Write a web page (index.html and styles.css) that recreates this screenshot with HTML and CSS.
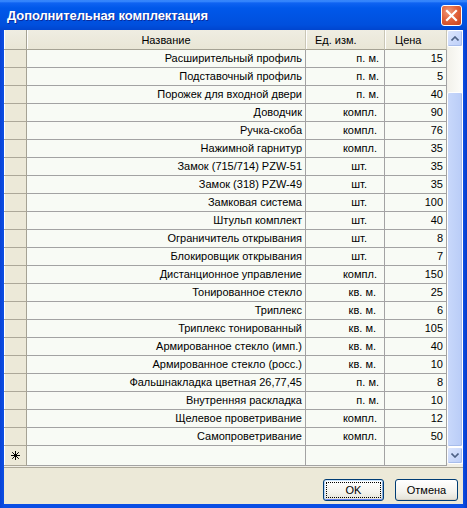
FILE: index.html
```html
<!DOCTYPE html>
<html lang="ru">
<head>
    <meta charset="UTF-8">
    <title>Дополнительная комплектация</title>
    <link rel="stylesheet" href="styles.css">
</head>
<body>
<div class="window">
    <!-- заголовок окна -->
    <div class="titlebar">
        <span class="title">Дополнительная комплектация</span>
        <span class="close">
            <svg width="13" height="13" viewBox="0 0 13 13"><path d="M2 2 L11 11 M11 2 L2 11" stroke="#fff" stroke-width="2.2" stroke-linecap="square"/></svg>
        </span>
    </div>
    <div class="client">
        <div class="gridBox">
            <div class="grid">
                <table class="table">
                    <colgroup>
                        <col class="cRh">
                        <col class="cName">
                        <col class="cUnit">
                        <col class="cPrice">
                    </colgroup>
                    <thead>
                    <tr>
                        <th class="rh"></th>
                        <th class="hName">Название</th>
                        <th class="hLeft">Ед. изм.</th>
                        <th class="hLeft hPrice">Цена</th>
                    </tr>
                    </thead>
                    <tbody>
                    <tr><td class="rh"></td><td class="name">Расширительный профиль</td><td class="unit pm">п. м.</td><td class="price">15</td></tr>
                    <tr><td class="rh"></td><td class="name">Подставочный профиль</td><td class="unit pm">п. м.</td><td class="price">5</td></tr>
                    <tr><td class="rh"></td><td class="name">Порожек для входной двери</td><td class="unit pm">п. м.</td><td class="price">40</td></tr>
                    <tr><td class="rh"></td><td class="name">Доводчик</td><td class="unit kompl">компл.</td><td class="price">90</td></tr>
                    <tr><td class="rh"></td><td class="name">Ручка-скоба</td><td class="unit kompl">компл.</td><td class="price">76</td></tr>
                    <tr><td class="rh"></td><td class="name">Нажимной гарнитур</td><td class="unit kompl">компл.</td><td class="price">35</td></tr>
                    <tr><td class="rh"></td><td class="name">Замок (715/714) PZW-51</td><td class="unit sht">шт.</td><td class="price">35</td></tr>
                    <tr><td class="rh"></td><td class="name">Замок (318) PZW-49</td><td class="unit sht">шт.</td><td class="price">35</td></tr>
                    <tr><td class="rh"></td><td class="name">Замковая система</td><td class="unit sht">шт.</td><td class="price">100</td></tr>
                    <tr><td class="rh"></td><td class="name">Штульп комплект</td><td class="unit sht">шт.</td><td class="price">40</td></tr>
                    <tr><td class="rh"></td><td class="name">Ограничитель открывания</td><td class="unit sht">шт.</td><td class="price">8</td></tr>
                    <tr><td class="rh"></td><td class="name">Блокировщик открывания</td><td class="unit sht">шт.</td><td class="price">7</td></tr>
                    <tr><td class="rh"></td><td class="name">Дистанционное управление</td><td class="unit kompl">компл.</td><td class="price">150</td></tr>
                    <tr><td class="rh"></td><td class="name">Тонированное стекло</td><td class="unit kvm">кв. м.</td><td class="price">25</td></tr>
                    <tr><td class="rh"></td><td class="name">Триплекс</td><td class="unit kvm">кв. м.</td><td class="price">6</td></tr>
                    <tr><td class="rh"></td><td class="name">Триплекс тонированный</td><td class="unit kvm">кв. м.</td><td class="price">105</td></tr>
                    <tr><td class="rh"></td><td class="name">Армированное стекло (имп.)</td><td class="unit kvm">кв. м.</td><td class="price">40</td></tr>
                    <tr><td class="rh"></td><td class="name">Армированное стекло (росс.)</td><td class="unit kvm">кв. м.</td><td class="price">10</td></tr>
                    <tr><td class="rh"></td><td class="name">Фальшнакладка цветная 26,77,45</td><td class="unit pm">п. м.</td><td class="price">8</td></tr>
                    <tr><td class="rh"></td><td class="name">Внутренняя раскладка</td><td class="unit pm">п. м.</td><td class="price">10</td></tr>
                    <tr><td class="rh"></td><td class="name">Щелевое проветривание</td><td class="unit kompl">компл.</td><td class="price">12</td></tr>
                    <tr><td class="rh"></td><td class="name">Самопроветривание</td><td class="unit kompl">компл.</td><td class="price">50</td></tr>
                    <!-- новая строка -->
                    <tr>
                        <td class="rh newRow">
                            <svg width="9" height="9" viewBox="0 0 9 9"><path d="M4.5 0 V9 M0 4.5 H9 M1.2 1.2 L7.8 7.8 M7.8 1.2 L1.2 7.8" stroke="#000" stroke-width="1"/></svg>
                        </td>
                        <td></td><td></td><td></td>
                    </tr>
                    </tbody>
                </table>
                <!-- полоса прокрутки -->
                <div class="scroll">
                    <div class="sBtn">
                        <svg width="8" height="5" viewBox="0 0 8 5"><path d="M0.5 4.5 L4 1 L7.5 4.5" fill="none" stroke="#4D6185" stroke-width="1.6"/></svg>
                    </div>
                    <div class="track">
                        <div class="thumb"></div>
                    </div>
                    <div class="sBtn">
                        <svg width="8" height="5" viewBox="0 0 8 5"><path d="M0.5 0.5 L4 4 L7.5 0.5" fill="none" stroke="#4D6185" stroke-width="1.6"/></svg>
                    </div>
                </div>
            </div>
        </div>
        <div class="footer">
            <button class="btn btnDefault"><span class="focus">OK</span></button>
            <button class="btn btnCancel">Отмена</button>
        </div>
    </div>
</div>
</body>
</html>
```

FILE: styles.css
```css
* {
    margin: 0;
    padding: 0;
    box-sizing: border-box;
}
body {
    background-color: #0A4ADF;
    font-family: "Liberation Sans", Arial, sans-serif;
    font-size: 11px;
    color: #000;
}
.window {
    width: 467px;
    height: 508px;
    display: flex;
    flex-direction: column;
    background: linear-gradient(to right, #0842D6, #0A4EE4 4px, #0A4EE4 463px, #0639C8);
}
.titlebar {
    height: 30px;
    flex: none;
    display: flex;
    align-items: center;
    justify-content: space-between;
    padding: 1px 5px 0 7px;
    background: linear-gradient(#2D7BF6 0, #3D8EFF 1px, #0F63F2 3px, #0058EA 8px, #0053E2 18px, #004FDD 25px, #0045CF 30px);
}
.title {
    color: #fff;
    font-weight: bold;
    font-size: 13px;
    letter-spacing: -0.1px;
    text-shadow: 1px 1px #0B2A9A;
}
.close {
    width: 21px;
    height: 21px;
    display: flex;
    align-items: center;
    justify-content: center;
    border: 1px solid #fff;
    border-radius: 3px;
    background: radial-gradient(circle at 35% 30%, #EE9A7C, #E2633C 45%, #C8401A);
}
.client {
    flex: 1;
    margin: 0 4px 4px;
    background-color: #ECE9D8;
    display: flex;
    flex-direction: column;
}
.gridBox {
    padding-bottom: 3px;
    border-bottom: 1px solid #ACA899;
    background-color: #F1EFE6;
}
.grid {
    height: 434px;
    display: flex;
}
.table {
    width: 443px;
    table-layout: fixed;
    border-collapse: separate;
    border-spacing: 0;
    background-color: #F8FBF5;
    align-self: flex-start;
}
.cRh { width: 23px; }
.cName { width: 279px; }
.cUnit { width: 79px; }
.cPrice { width: 62px; }
.table th {
    height: 20px;
    font-weight: normal;
    background: linear-gradient(#EFEDE2, #E9E6D6);
    border-right: 1px solid #C9C6B6;
    border-bottom: 1px solid #A5A294;
    box-shadow: inset 1px 0 #fff;
    white-space: nowrap;
    overflow: hidden;
}
.table .hName {
    text-align: center;
}
.table .hLeft {
    text-align: left;
    padding-left: 9px;
}
.table .hPrice {
    padding-left: 10px;
}
.table td {
    height: 18px;
    line-height: 17px;
    border-right: 1px solid #A3A3A3;
    border-bottom: 1px solid #A3A3A3;
    white-space: nowrap;
    overflow: hidden;
}
.table .rh {
    background-color: #ECE9D8;
    border-right: 1px solid #A5A294;
    box-shadow: inset 1px 0 #fff;
}
.table td.rh {
    border-bottom-color: #ACA899;
}
.table .newRow {
    text-align: center;
    padding-top: 2px;
}
.name {
    text-align: right;
    padding-right: 3px;
}
.unit {
    text-align: right;
}
.pm { padding-right: 5px; }
.kompl { padding-right: 7px; }
.kvm { padding-right: 8px; }
.sht { padding-right: 17px; }
.price {
    text-align: right;
    padding-right: 3px;
}
.scroll {
    width: 16px;
    display: flex;
    flex-direction: column;
    background: linear-gradient(to right, #F2F1EA, #FDFDFA);
}
.sBtn {
    height: 17px;
    flex: none;
    display: flex;
    align-items: center;
    justify-content: center;
    border: 1px solid #fff;
    border-radius: 2px;
    background: linear-gradient(135deg, #DCE6FD, #BCCEF8);
    box-shadow: inset -1px -1px #A8BDEB;
}
.track {
    flex: 1;
    display: flex;
    flex-direction: column;
    padding-top: 45px;
}
.thumb {
    flex: 1;
    border: 1px solid #fff;
    border-radius: 2px;
    background: linear-gradient(to right, #C8D8FB, #B9CCF7);
    box-shadow: inset -1px -1px #A7BCEA;
}
.footer {
    flex: 1;
    display: flex;
    justify-content: flex-end;
    align-items: flex-start;
    gap: 11px;
    padding: 11px 5px 0 0;
}
.btn {
    width: 61px;
    height: 22px;
    font-family: "Liberation Sans", Arial, sans-serif;
    font-size: 11px;
    color: #000;
    border: 1px solid #003C74;
    border-radius: 3px;
    background: linear-gradient(#FFFFFF, #F4F3EE 60%, #E3E1D6);
    box-shadow: inset 0 -1px #D6D0C5;
}
.btnCancel {
    width: 63px;
}
.btnDefault {
    padding: 2px;
    box-shadow: inset 0 1px #CEE7FF, inset 1px 0 #B8D6FB, inset -1px 0 #8DB2E3, inset 0 -1px #6982EE;
}
.focus {
    display: flex;
    align-items: center;
    justify-content: center;
    height: 100%;
    border: 1px dotted #000;
}
```
